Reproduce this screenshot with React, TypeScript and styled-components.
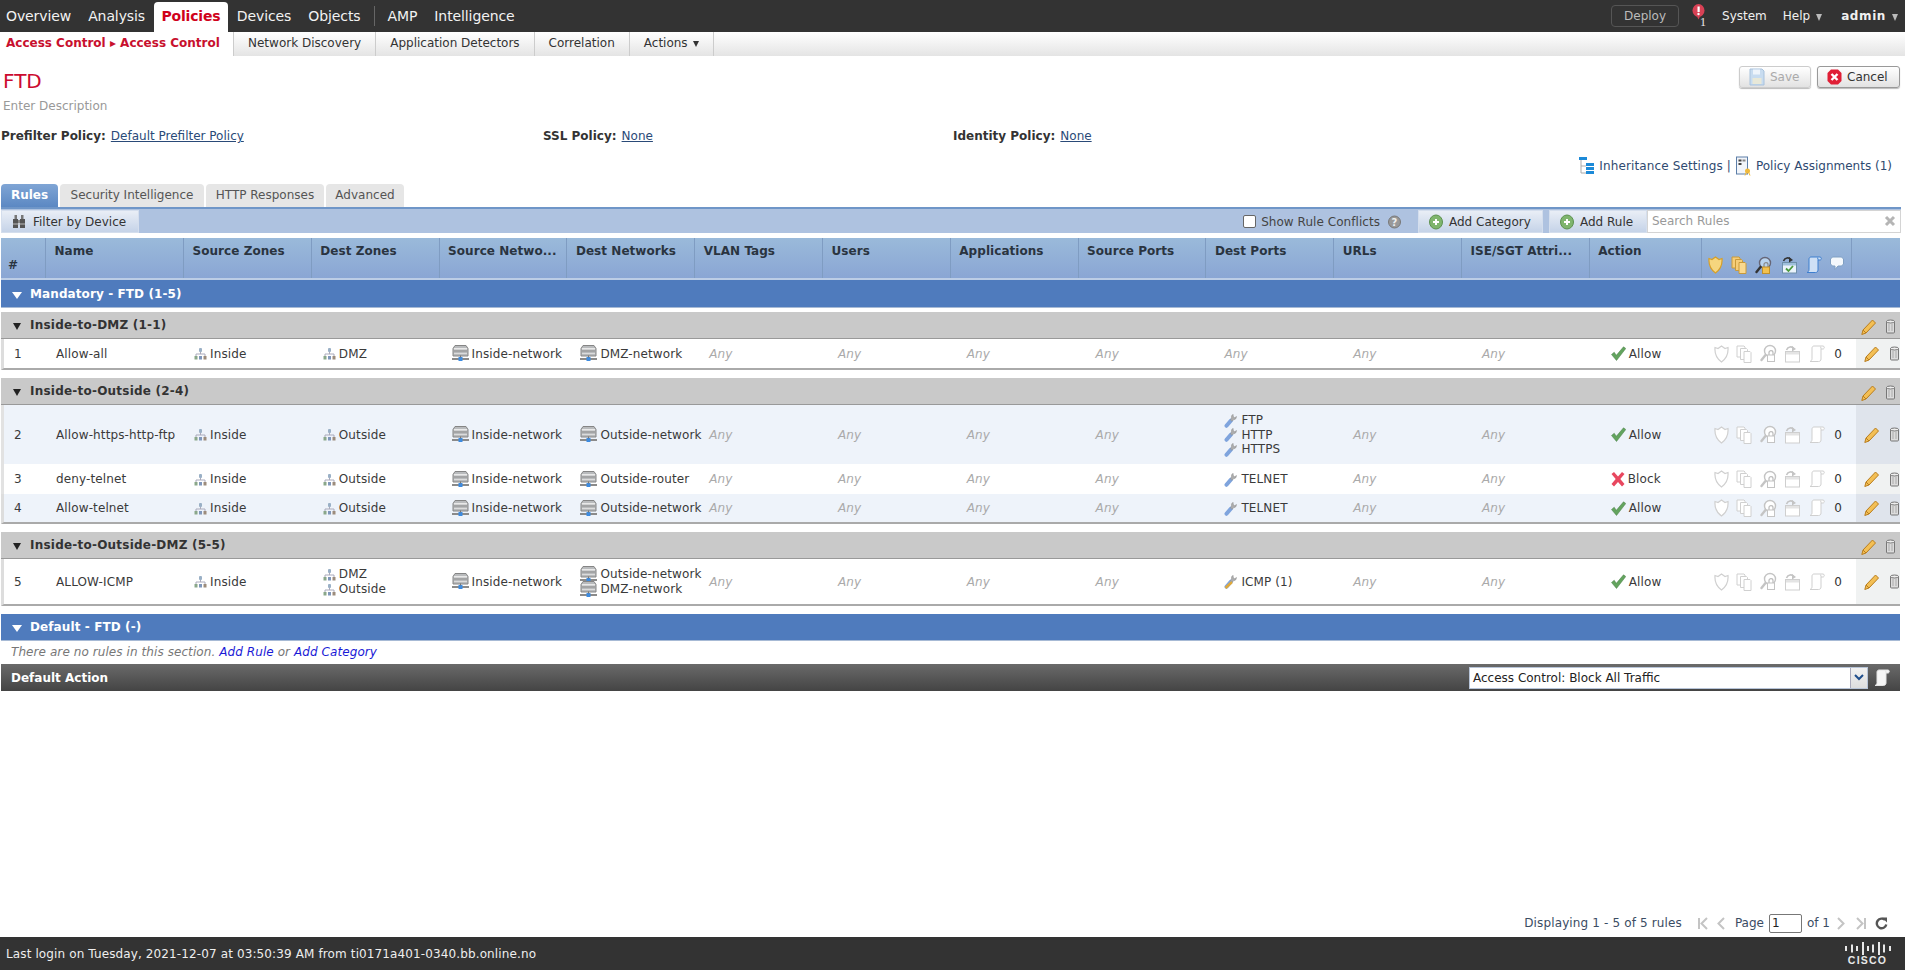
import React from "react";
import styled, { createGlobalStyle } from "styled-components";

const Global = createGlobalStyle`
  html, body { margin: 0; padding: 0; background: #fff; overflow: hidden; }
  body { font-family: "DejaVu Sans", Verdana, sans-serif; font-size: 12px; color: #333; }
  * { box-sizing: border-box; }
`;

const Page = styled.div`
  width: 1905px; height: 970px; display: flex; flex-direction: column; overflow: hidden;
`;

/* ---------- top navigation ---------- */
const TopBar = styled.header`
  height: 32px; background: #333; display: flex; align-items: flex-end; justify-content: space-between; flex: none;
`;
const NavGroup = styled.nav`
  display: flex; align-items: flex-end; height: 30px;
`;
const NavItem = styled.a<{ $active?: boolean }>`
  height: 30px; padding: 0 ${p => (p.$active ? 8 : 8.5)}px; line-height: 29px; font-size: 14px; display: block;
  color: ${p => (p.$active ? "#d0021b" : "#f2f2f2")};
  background: ${p => (p.$active ? "#fff" : "transparent")};
  border-radius: ${p => (p.$active ? "4px 4px 0 0" : "0")};
  font-weight: ${p => (p.$active ? 700 : 400)};
  letter-spacing: ${p => (p.$active ? "-.2px" : "-.1px")};
`;
const FirstNav = styled(NavItem)`padding-left: 6px;`;
const NavDivider = styled.span`
  width: 1px; height: 20px; background: #666; margin: 0 4px 6px 5px;
`;
const RightNav = styled.div`
  display: flex; align-items: center; height: 32px; padding-right: 7px; color: #f0f0f0; font-size: 12px;
`;
const DeployButton = styled.span`
  width: 68px; height: 22px; border: 1px solid #555; border-radius: 4px; color: #bbb; text-align: center; line-height: 20px; margin-right: 13px;
`;
const Alert = styled.span`
  display: flex; align-items: flex-start; width: 14px; height: 24px; position: relative;
`;
const AlertCount = styled.span`
  position: absolute; left: 8px; top: 11px; font-size: 12px; font-family: "Liberation Serif", serif; color: #eee;
`;
const RightLink = styled.span<{ $bold?: boolean }>`
  margin-left: ${p => (p.$bold ? 19 : 16)}px; font-weight: ${p => (p.$bold ? 700 : 400)}; white-space: nowrap;
  letter-spacing: ${p => (p.$bold ? ".6px" : "0")};
`;
const Caret = styled.i`
  display: inline-block; width: 0; height: 0; border: 3.5px solid transparent; border-top: 7px solid #bbb; border-bottom: 0; margin-left: 6px; vertical-align: -1px;
`;

const SubNav = styled.div`
  height: 24px; flex: none; display: flex; background: linear-gradient(#fff, #e4e4e4);
`;
const SubActive = styled.div`
  width: 234px; height: 24px; background: #fff; color: #c8102e; font-weight: 700; padding-left: 6px; line-height: 22px; border-right: 1px solid #ccc; white-space: nowrap; font-size: 12px;
`;
const SubItem = styled.div`
  height: 24px; padding: 0 14px; line-height: 22px; border-right: 1px solid #ccc; color: #333; white-space: nowrap;
`;
const SmallCaret = styled.i`
  display: inline-block; width: 0; height: 0; border: 3px solid transparent; border-top: 6px solid #333; border-bottom: 0; margin-left: 5px;
`;

/* ---------- policy title ---------- */
const TitleBlock = styled.section`
  height: 128px; flex: none; display: flex; flex-direction: column; padding-right: 5px;
`;
const TitleRow = styled.div`
  display: flex; justify-content: space-between; height: 35px; padding-top: 10px;
`;
const Title = styled.h1`
  margin: 0 0 0 3px; font-size: 20px; font-weight: 400; color: #cc0a2f; line-height: 30px;
`;
const Buttons = styled.div`
  display: flex; gap: 6px;
`;
const ActionButton = styled.button<{ $disabled?: boolean; $w: number }>`
  width: ${p => p.$w}px; height: 22px; padding: 0 0 0 9px; display: flex; align-items: center; gap: 5px; font: 12px "DejaVu Sans", sans-serif;
  color: ${p => (p.$disabled ? "#aaa" : "#333")}; border: 1px solid ${p => (p.$disabled ? "#ccc" : "#999")}; border-radius: 3px;
  background: linear-gradient(#fff, #e2e2e2); box-shadow: 0 1px 1px #bbb;
`;
const Description = styled.div`
  margin: 8px 0 0 3px; color: #999; line-height: 14px;
`;
const PolicyRow = styled.div`
  display: flex; margin-top: 16px; height: 15px; line-height: 15px; white-space: nowrap;
`;
const PolicyItem = styled.div<{ $w: number; $pad?: number }>`
  width: ${p => p.$w}px; padding-left: ${p => p.$pad ?? 0}px;
  b { color: #333; margin-right: 5px; }
  a { color: #2a4a78; text-decoration: underline; }
`;
const InheritRow = styled.div`
  display: flex; justify-content: flex-end; align-items: center; height: 18px; margin-top: 13px; padding-right: 8px; gap: 5px; color: #2f4a70; white-space: nowrap;
`;
const InheritText = styled.span`letter-spacing: .12px;`;

/* ---------- tabs + toolbar ---------- */
const TabBar = styled.div`
  height: 23px; flex: none; display: flex; gap: 2px; padding-left: 1px;
`;
const Tab = styled.div<{ $active?: boolean; $w: number }>`
  width: ${p => p.$w}px; height: 23px; text-align: center; line-height: 23px; border-radius: 4px 4px 0 0;
  background: ${p => (p.$active ? "linear-gradient(#7fa5d5, #5c88c3)" : "#e6e6e6")};
  color: ${p => (p.$active ? "#fff" : "#555")}; font-weight: ${p => (p.$active ? 700 : 400)};
`;
const Toolbar = styled.div`
  width: 1900px; height: 26px; flex: none; margin-left: 1px; display: flex; align-items: stretch; background: #aec2e0; border-top: 2px solid #6f96c8; padding-top: 1px;
`;
const ToolButton = styled.div<{ $w: number; $gap?: number }>`
  width: ${p => p.$w}px; height: 23px; display: flex; align-items: center; gap: ${p => p.$gap ?? 6}px; padding-left: 10px; background: linear-gradient(#e9eef6, #c5d3e8); border: 1px solid #d4deed; color: #333; white-space: nowrap;
`;
const Spacer = styled.div`flex: 1;`;
const ConflictLabel = styled.label`
  display: flex; align-items: center; color: #444; margin-right: 17px; white-space: nowrap;
`;
const ConflictText = styled.span`margin: 0 8px 0 5px; letter-spacing: .05px;`;
const CheckBox = styled.span`
  width: 13px; height: 13px; background: #fff; border: 1px solid #666; border-radius: 2px;
`;
const ToolGap = styled.div`width: 6px;`;
const SearchBox = styled.div`
  width: 254px; height: 23px; background: #fff; border: 1px solid #d4d4d4; display: flex; align-items: center; justify-content: space-between; padding: 0 4px 2px 4px; color: #999;
`;

/* ---------- table ---------- */
const Table = styled.div`
  width: 1899px; margin: 5px 0 0 1px; flex: none; overflow: hidden;
`;
const HeaderRow = styled.div`
  height: 42px; display: grid; grid-template-columns: 45px 138px repeat(11, 127.8px) 112px 150px 1fr; background: linear-gradient(#9abada, #8aa6d4); border-bottom: 2px solid #bccde6;
`;
const HeadCell = styled.div<{ $bottom?: boolean; $last?: boolean }>`
  font-weight: 700; color: #2a3440; padding: ${p => (p.$bottom ? "20px 0 0 7px" : "6px 0 0 8.5px")}; border-right: ${p => (p.$last ? "0" : "1px solid #7f9cc2")}; white-space: nowrap; line-height: 14px; letter-spacing: .05px;
`;
const HeadIcons = styled.div`
  display: flex; padding: 18px 0 0 6px; gap: 8.3px; border-right: 1px solid #7f9cc2;
`;
const Band = styled.div<{ $mt?: number; $h?: number }>`
  height: ${p => p.$h ?? 28}px; margin-top: ${p => p.$mt ?? 0}px; background: #4f7bbd; border-bottom: 1px solid #a7bad5; color: #fff; font-weight: 700; display: flex; align-items: center; padding-left: 11px; gap: 8px; width: 1899px; letter-spacing: .1px;
`;
const BandCaret = styled.i`
  display: block; width: 0; height: 0; border: 5.5px solid transparent; border-top: 7px solid #fff; border-bottom: 0; margin-top: 3px;
`;
const Category = styled.div<{ $mt: number }>`
  height: 27px; margin-top: ${p => p.$mt}px; background: #c9c9c9; border-bottom: 1px solid #999; display: flex; align-items: center; padding-left: 12px; gap: 9px; color: #333; font-weight: 700; letter-spacing: .22px;
`;
const CategoryCaret = styled.i`
  display: block; width: 0; height: 0; border: 4.5px solid transparent; border-top: 7px solid #222; border-bottom: 0; margin-top: 3px;
`;
const CategoryOps = styled.div`
  margin-left: auto; display: flex; gap: 9px; padding: 3px 4px 0 0; align-items: center;
`;
const RuleRow = styled.div<{ $h: number; $alt?: boolean; $last?: boolean }>`
  height: ${p => p.$h}px; display: grid; grid-template-columns: 42px 138px repeat(11, 128.8px) 104px 151px 1fr; align-items: stretch;
  background: ${p => (p.$alt ? "#eef3fa" : "#fff")}; border-left: 3px solid ${p => (p.$last ? "#ddd" : "#e2e2e2")}; border-bottom: ${p => (p.$last ? "2px solid #aaa" : "0")};
  color: #3a3a3a; white-space: nowrap; letter-spacing: .12px;
`;
const Cell = styled.div<{ $pad?: number }>`
  display: flex; flex-direction: column; justify-content: center; padding-left: ${p => p.$pad ?? 10}px; line-height: 14px; min-width: 0;
`;
const Any = styled(Cell)`
  color: #aaa; font-style: italic;
`;
const Item = styled.div<{ $gap?: number; $lh?: number }>`
  display: flex; align-items: center; gap: ${p => p.$gap ?? 3}px; height: ${p => p.$lh ?? 15}px;
`;
const IconCell = styled.div`
  display: flex; align-items: center; padding-left: 9px; gap: 7.5px;
`;
const Zero = styled.span`
  color: #333; margin-left: 2px;
`;
const OpsCell = styled.div<{ $alt?: boolean }>`
  display: flex; align-items: center; gap: 10px; padding-left: 8px; background: ${p => (p.$alt ? "#dfe4ec" : "#f0f2f2")}; overflow: hidden;
`;
const NoRules = styled.div`
  height: 23px; line-height: 22px; padding-left: 10px; font-style: italic; color: #777; letter-spacing: .08px;
  a { color: #1a1ad6; }
`;
const DefaultAction = styled.div`
  height: 27px; background: linear-gradient(#6a6a6a, #444); display: flex; align-items: center; padding-left: 10px; color: #fff; font-weight: 700;
`;
const Select = styled.div`
  margin-left: auto; width: 399px; height: 22px; background: #fff; border: 1px solid #b7c4d8; display: flex; align-items: center; justify-content: space-between; font-weight: 400; color: #222; padding-left: 3px;
`;
const SelectArrow = styled.span`
  width: 17px; height: 20px; background: linear-gradient(#f2f2f2, #ddd); border-left: 1px solid #aab; display: flex; align-items: center; justify-content: center;
`;
const NoteWrap = styled.span`
  display: flex; margin: 0 10px 0 6px;
`;

/* ---------- pager + footer ---------- */
const Pager = styled.div`
  margin-top: auto; height: 28px; flex: none; display: flex; align-items: center; justify-content: flex-end; padding: 0 17px 0 0; color: #3b4c63; white-space: nowrap;
`;
const PagerInfo = styled.span`margin-right: 15px; letter-spacing: .14px;`;
const PagerIcon = styled.span<{ $mr?: number }>`display: flex; margin-right: ${p => p.$mr ?? 6}px;`;
const PageInput = styled.span`
  width: 33px; height: 19px; border: 1px solid #777; border-radius: 2px; margin: 0 5px 0 5px; padding-left: 2px; color: #222; line-height: 17px; background: #fff;
`;
const Footer = styled.footer`
  height: 33px; flex: none; background: #333; color: #eee; display: flex; align-items: center; justify-content: space-between; padding: 0 14px 0 6px; letter-spacing: .12px;
`;
const CiscoMark = styled.div`
  display: flex; flex-direction: column; align-items: center; width: 47px;
`;
const CiscoWord = styled.span`
  color: #e8e8e8; font: 700 10.5px/10px "Liberation Sans", sans-serif; letter-spacing: 1.2px;
`;

/* ---------- icons ---------- */
const Svg = ({ w = 16, h = 16, children }: { w?: number; h?: number; children: React.ReactNode }) => (
  <svg width={w} height={h} viewBox={`0 0 ${w} ${h}`} style={{ flex: "none", display: "block" }}>{children}</svg>
);
const Zone = () => (
  <Svg w={13} h={13}>
    <rect x="5" y="1" width="3" height="4" rx="1" fill="#9ab0c6" />
    <path d="M6.500 5v2M2 9V7h9v2" stroke="#aab" fill="none" />
    <rect x="0.500" y="9" width="3" height="3.500" fill="#8aa78a" />
    <rect x="5" y="9" width="3" height="3.500" fill="#7f97bc" />
    <rect x="9.500" y="9" width="3" height="3.500" fill="#9c8c7c" />
  </Svg>
);
const Net = () => (
  <Svg w={17} h={17}>
    <path d="M3 .5h11L16 3.500V11H1V3.500z" fill="#b9bbbd" stroke="#858585" />
    <rect x="2" y="3" width="13" height="1.500" fill="#e9e9e9" />
    <rect x="2" y="5.500" width="13" height="1" fill="#8e8e8e" />
    <rect x="2" y="8" width="13" height="1" fill="#dcdcdc" />
    <rect x="0" y="13" width="17" height="2" fill="#8a8a8a" />
    <rect x="6.500" y="12" width="4" height="4" fill="#3d8be0" />
    <rect x="8" y="10.500" width="1" height="2" fill="#777" />
  </Svg>
);
const Wrench = ({ tag }: { tag?: boolean }) => (
  <Svg w={13} h={15}>
    <path d="M2.500 12.800 7 7.500" stroke="#7fa4dd" strokeWidth="4" strokeLinecap="round" />
    <path d="M9 1.300A3.300 3.300 0 0 0 7.500 5L6.500 7 8 8.300 9.500 6.800A3.300 3.300 0 0 0 12.500 3.500L10.700 4.700 9.300 3.600z" fill="#adadad" stroke="#8c8c8c" strokeWidth=".5" />
    {tag && <path d="M1.500 14 8 8" stroke="#e0a93a" strokeWidth="2.400" />}
  </Svg>
);
const Check = () => (
  <Svg w={15} h={15}>
    <path d="M.5 8.500 3.200 6.200 5.300 9.300 12.500.8 14.800 2.500 5.500 14.500z" fill="#63a45e" stroke="#4a7f48" strokeWidth=".5" />
  </Svg>
);
const Cross = () => (
  <Svg w={14} h={16}>
    <path d="M3 1l4 4.500L11 1l2.500 2L9.300 8l4.200 5-2.500 2.500L7 11l-4 4.500L.5 13l4.200-5L.5 3z" fill="#e8475f" />
  </Svg>
);
const Shield = ({ on }: { on?: boolean }) => (
  <Svg w={15} h={18}>
    <path d="M1 2.500 4 3.500 7.500 1 11 3.500l3-1c.5 6-1.500 11-6.500 14.500C2.500 13.500 .5 8.500 1 2.500z" fill={on ? "#f6d67e" : "#fff"} stroke={on ? "#d69f2a" : "#d0d0d0"} strokeWidth="1.200" />
  </Svg>
);
const Copy = ({ on }: { on?: boolean }) => (
  <Svg w={16} h={18}>
    <path d="M1 1h7l1 1v10H1z" fill={on ? "#f5cd78" : "#fff"} stroke={on ? "#c99a3a" : "#d0d0d0"} />
    <path d="M4.500 3.500h6l1 1v10h-7z" fill={on ? "#f5cd78" : "#fff"} stroke={on ? "#c99a3a" : "#d0d0d0"} />
    <path d="M8 6.500h6l1 1v10H8z" fill={on ? "#fad98f" : "#fff"} stroke={on ? "#c99a3a" : "#d0d0d0"} />
  </Svg>
);
const SearchLock = ({ on }: { on?: boolean }) => (
  <Svg w={17} h={19}>
    <circle cx="10" cy="7" r="5.500" fill={on ? "#b8d3ee" : "#fff"} stroke={on ? "#667" : "#c4c4c4"} strokeWidth="1.400" />
    <path d="M5.500 11 1.500 16" stroke={on ? "#333" : "#c4c4c4"} strokeWidth="2.400" strokeLinecap="round" />
    <path d="M9 11V8.500c0-2.500 4-2.500 4 0V11" fill="none" stroke={on ? "#888" : "#bbb"} strokeWidth="1.200" />
    <rect x="7.500" y="11" width="7" height="6.500" fill={on ? "#f2c14e" : "#fff"} stroke={on ? "#c0902a" : "#c4c4c4"} />
  </Svg>
);
const Inspect = ({ on }: { on?: boolean }) => (
  <Svg w={17} h={18}>
    <rect x="1.500" y="6.500" width="14" height="10.500" fill={on ? "#eaf3fb" : "#fff"} stroke={on ? "#6e8faa" : "#cfcfcf"} />
    <rect x="2" y="7" width="13" height="2.500" fill={on ? "#9fc0dc" : "#e4e4e4"} />
    <path d="M2.500 5C4 1.500 8 1 9.500 3.500" fill="none" stroke={on ? "#333" : "#c4c4c4"} strokeWidth="1.600" />
    <path d="M8 1l4 3-4 2.500z" fill={on ? "#333" : "#c4c4c4"} />
    {on && <path d="M5 12.500l2.500 2.500 4.500-5" fill="none" stroke="#4c9a3e" strokeWidth="1.800" />}
  </Svg>
);
const Scroll = ({ on, light }: { on?: boolean; light?: boolean }) => {
  const fill = light ? "#f6f6f6" : on ? "#cfe0f5" : "#fff";
  const stroke = light ? "#e4e4e4" : on ? "#3d7ecf" : "#cfcfcf";
  return (
    <Svg w={16} h={18}>
      <path d="M5 1h9c1.500 0 1.800 2.500.3 3H12v10c0 1.500-1 2.500-2.500 2.500H1c1.200-.6 2-1.400 2-2.700V3c0-1.200 1-2 2-2z" fill={fill} stroke={stroke} />
      <path d="M11 1.500c1 .5 1 2 1 2.500" fill="none" stroke={stroke} />
    </Svg>
  );
};
const Bubble = () => (
  <Svg w={14} h={15}>
    <path d="M2.500 1h9L13.500 3v5l-2 2H8L5 13.500V10H2.500L.5 8V3z" fill="#f4f8fc" stroke="#7f9fc2" />
  </Svg>
);
const Pencil = () => (
  <Svg w={15} h={16}>
    <path d="M11.500 1 14.500 4 5 14 .8 15.500 2 11z" fill="#f3bf55" stroke="#b87d1d" />
    <path d="M2 11l3 3" stroke="#b87d1d" />
  </Svg>
);
const Trash = () => (
  <Svg w={11} h={15}>
    <rect x="1.500" y="2" width="8" height="12" rx="1" fill="#dcdcdc" stroke="#777" />
    <ellipse cx="5.500" cy="2.500" rx="4" ry="1.500" fill="#eee" stroke="#777" />
    <path d="M4 5v7M7 5v7" stroke="#aaa" />
  </Svg>
);
const AddIcon = () => (
  <Svg w={14} h={16}>
    <ellipse cx="7" cy="8" rx="6.500" ry="7" fill="#7fb56e" stroke="#5d9150" />
    <path d="M7 5v6M4 8h6" stroke="#fff" strokeWidth="2" />
  </Svg>
);
const Binoculars = () => (
  <Svg w={14} h={15}>
    <rect x="1" y="5" width="5" height="9" fill="#555" />
    <rect x="8" y="5" width="5" height="9" fill="#555" />
    <rect x="2.500" y="1" width="2.500" height="4" fill="#777" />
    <rect x="9" y="1" width="2.500" height="4" fill="#777" />
    <rect x="6" y="6" width="2" height="3" fill="#888" />
    <path d="M1 10h12" stroke="#bbb" />
  </Svg>
);
const Help = () => (
  <Svg w={13} h={14}>
    <circle cx="6.500" cy="7" r="6" fill="#999" stroke="#777" />
    <text x="6.500" y="10.500" textAnchor="middle" fontSize="10" fontWeight="700" fill="#eee" fontFamily="DejaVu Sans">?</text>
  </Svg>
);
const CloseX = () => (
  <Svg w={12} h={12}>
    <path d="M2 2 10 10M10 2 2 10" stroke="#b5b5b5" strokeWidth="3" />
  </Svg>
);
const TreeIcon = () => (
  <Svg w={16} h={20}>
    <rect x="1" y="1" width="8" height="3" fill="#1c8ad8" />
    <path d="M3 4v13h5M3 10h5" fill="none" stroke="#aaa" />
    <rect x="8" y="7" width="8" height="3" fill="#1c8ad8" />
    <rect x="8" y="11" width="8" height="3" fill="#1c8ad8" />
    <rect x="8" y="15" width="8" height="3" fill="#1c8ad8" />
  </Svg>
);
const AssignIcon = () => (
  <Svg w={15} h={20}>
    <rect x=".5" y="1" width="11" height="17" fill="#f2f5fa" stroke="#5c7ea8" />
    <rect x="2.500" y="3.500" width="3" height="2" fill="#444" />
    <rect x="6.500" y="3.500" width="3" height="2" fill="#888" />
    <rect x="2.500" y="7" width="3" height="2" fill="#444" />
    <circle cx="11.500" cy="15" r="2.500" fill="#f0b93a" />
    <path d="M10 17l-1 2.500M13 17l1 2.500" stroke="#f0b93a" />
  </Svg>
);
const SaveIcon = () => (
  <Svg w={16} h={18}>
    <path d="M1 1h12l2 2v14H1z" fill="#c8dcf0" stroke="#a9c2dc" />
    <rect x="4" y="1.500" width="7" height="5" fill="#eef4fb" />
    <rect x="3.500" y="10" width="9" height="6" fill="#e8e8d8" />
  </Svg>
);
const CancelIcon = () => (
  <Svg w={15} h={16}>
    <path d="M4 .5h7L14.500 4v8L11 15.500H4L.5 12V4z" fill="#e01f36" />
    <path d="M4.500 5 10.500 11M10.500 5 4.500 11" stroke="#fff" strokeWidth="2.400" />
  </Svg>
);
const AlertIcon = () => (
  <Svg w={13} h={18}>
    <ellipse cx="6.500" cy="6.500" rx="6" ry="6.500" fill="#d84155" />
    <rect x="5.500" y="2.500" width="2.200" height="5.500" fill="#fff" />
    <circle cx="6.500" cy="10" r="1.200" fill="#fff" />
    <path d="M5 12.500h3l-1.500 3z" fill="#d84155" />
  </Svg>
);
const Chevron = () => (
  <Svg w={10} h={7}>
    <path d="M1 1 5 5 9 1" stroke="#1f4e8c" strokeWidth="2" fill="none" />
  </Svg>
);
const PagerGlyph = ({ d }: { d: string }) => (
  <Svg w={12} h={13}>
    <path d={d} fill="none" stroke="#c4c4c4" strokeWidth="2" />
  </Svg>
);
const Refresh = () => (
  <Svg w={13} h={13}>
    <path d="M10 3A4.800 4.800 0 1 0 11.300 7.500" fill="none" stroke="#555" strokeWidth="2.400" />
    <path d="M7 .5h5v5z" fill="#555" />
  </Svg>
);
const CiscoBars = () => (
  <svg width="46" height="13" viewBox="0 0 46 13" style={{ display: "block" }}>
    {[[1, 5], [7, 8], [12, 5], [18, 13], [23, 5], [28, 8], [34, 13], [39, 8], [45, 5]].map(([x, h]) => (
      <rect key={x} x={x - 1} y={(13 - h) / 2} width="2" height={h} fill="#e8e8e8" />
    ))}
  </svg>
);

/* ---------- data ---------- */
type Rule = {
  n: number; name: string; src: string; dst: string[]; net: string; dnet: string[];
  ports: string[]; tag?: boolean; block?: boolean; h: number; alt?: boolean; last?: boolean;
};
const categories: { title: string; mt: number; rules: Rule[] }[] = [
  { title: "Inside-to-DMZ (1-1)", mt: 4, rules: [
    { n: 1, name: "Allow-all", src: "Inside", dst: ["DMZ"], net: "Inside-network", dnet: ["DMZ-network"], ports: [], h: 31, last: true },
  ]},
  { title: "Inside-to-Outside (2-4)", mt: 8, rules: [
    { n: 2, name: "Allow-https-http-ftp", src: "Inside", dst: ["Outside"], net: "Inside-network", dnet: ["Outside-network"], ports: ["FTP", "HTTP", "HTTPS"], h: 59, alt: true },
    { n: 3, name: "deny-telnet", src: "Inside", dst: ["Outside"], net: "Inside-network", dnet: ["Outside-router"], ports: ["TELNET"], block: true, h: 30 },
    { n: 4, name: "Allow-telnet", src: "Inside", dst: ["Outside"], net: "Inside-network", dnet: ["Outside-network"], ports: ["TELNET"], h: 30, alt: true, last: true },
  ]},
  { title: "Inside-to-Outside-DMZ (5-5)", mt: 8, rules: [
    { n: 5, name: "ALLOW-ICMP", src: "Inside", dst: ["DMZ", "Outside"], net: "Inside-network", dnet: ["Outside-network", "DMZ-network"], ports: ["ICMP (1)"], tag: true, h: 47, last: true },
  ]},
];
const headers = ["Name", "Source Zones", "Dest Zones", "Source Netwo...", "Dest Networks", "VLAN Tags", "Users", "Applications", "Source Ports", "Dest Ports", "URLs", "ISE/SGT Attri...", "Action"];

const RowView = ({ r }: { r: Rule }) => (
  <RuleRow $h={r.h} $alt={r.alt} $last={r.last}>
    <Cell>{r.n}</Cell>
    <Cell>{r.name}</Cell>
    <Cell><Item><Zone />{r.src}</Item></Cell>
    <Cell>{r.dst.map(d => <Item key={d}><Zone />{d}</Item>)}</Cell>
    <Cell><Item $gap={3} $lh={17}><Net />{r.net}</Item></Cell>
    <Cell>{r.dnet.map(d => <Item key={d} $gap={3} $lh={15}><Net />{d}</Item>)}</Cell>
    <Any>Any</Any>
    <Any>Any</Any>
    <Any>Any</Any>
    <Any>Any</Any>
    {r.ports.length
      ? <Cell>{r.ports.map(p => <Item key={p} $gap={4} $lh={14.500}><Wrench tag={r.tag} />{p}</Item>)}</Cell>
      : <Any>Any</Any>}
    <Any>Any</Any>
    <Any>Any</Any>
    <Cell><Item $gap={3}>{r.block ? <Cross /> : <Check />}{r.block ? "Block" : "Allow"}</Item></Cell>
    <IconCell>
      <Shield /><Copy /><SearchLock /><Inspect /><Scroll /><Zero>0</Zero>
    </IconCell>
    <OpsCell $alt={r.alt}><Pencil /><Trash /></OpsCell>
  </RuleRow>
);

export default function App() {
  return (
    <Page>
      <Global />
      <TopBar>
        <NavGroup>
          <FirstNav>Overview</FirstNav>
          <NavItem>Analysis</NavItem>
          <NavItem $active>Policies</NavItem>
          <NavItem>Devices</NavItem>
          <NavItem>Objects</NavItem>
          <NavDivider />
          <NavItem>AMP</NavItem>
          <NavItem>Intelligence</NavItem>
        </NavGroup>
        <RightNav>
          <DeployButton>Deploy</DeployButton>
          <Alert><AlertIcon /><AlertCount>1</AlertCount></Alert>
          <RightLink>System</RightLink>
          <RightLink>Help<Caret /></RightLink>
          <RightLink $bold>admin<Caret /></RightLink>
        </RightNav>
      </TopBar>
      <SubNav>
        <SubActive>Access Control ▸ Access Control</SubActive>
        <SubItem>Network Discovery</SubItem>
        <SubItem>Application Detectors</SubItem>
        <SubItem>Correlation</SubItem>
        <SubItem>Actions<SmallCaret /></SubItem>
      </SubNav>
      <TitleBlock>
        <TitleRow>
          <Title>FTD</Title>
          <Buttons>
            <ActionButton $disabled $w={72}><SaveIcon />Save</ActionButton>
            <ActionButton $w={83}><CancelIcon />Cancel</ActionButton>
          </Buttons>
        </TitleRow>
        <Description>Enter Description</Description>
        <PolicyRow>
          <PolicyItem $w={543} $pad={1}><b>Prefilter Policy:</b><a>Default Prefilter Policy</a></PolicyItem>
          <PolicyItem $w={410}><b>SSL Policy:</b><a>None</a></PolicyItem>
          <PolicyItem $w={300}><b>Identity Policy:</b><a>None</a></PolicyItem>
        </PolicyRow>
        <InheritRow><TreeIcon /><InheritText>Inheritance Settings | </InheritText><AssignIcon />Policy Assignments (1)</InheritRow>
      </TitleBlock>
      <TabBar>
        <Tab $active $w={57}>Rules</Tab>
        <Tab $w={144}>Security Intelligence</Tab>
        <Tab $w={118}>HTTP Responses</Tab>
        <Tab $w={78}>Advanced</Tab>
      </TabBar>
      <Toolbar>
        <ToolButton $w={138} $gap={7}><Binoculars />Filter by Device</ToolButton>
        <Spacer />
        <ConflictLabel><CheckBox /><ConflictText>Show Rule Conflicts</ConflictText><Help /></ConflictLabel>
        <ToolButton $w={125}><AddIcon />Add Category</ToolButton>
        <ToolGap />
        <ToolButton $w={98}><AddIcon />Add Rule</ToolButton>
        <SearchBox>Search Rules<CloseX /></SearchBox>
      </Toolbar>
      <Table>
        <HeaderRow>
          <HeadCell $bottom>#</HeadCell>
          {headers.map(h => <HeadCell key={h}>{h}</HeadCell>)}
          <HeadIcons><Shield on /><Copy on /><SearchLock on /><Inspect on /><Scroll on /><Bubble /></HeadIcons>
          <HeadCell $last />
        </HeaderRow>
        <Band><BandCaret />Mandatory - FTD (1-5)</Band>
        {categories.map(c => (
          <React.Fragment key={c.title}>
            <Category $mt={c.mt}>
              <CategoryCaret />{c.title}
              <CategoryOps><Pencil /><Trash /></CategoryOps>
            </Category>
            {c.rules.map(r => <RowView key={r.n} r={r} />)}
          </React.Fragment>
        ))}
        <Band $mt={8} $h={27}><BandCaret />Default - FTD (-)</Band>
        <NoRules>There are no rules in this section. <a>Add Rule</a> or <a>Add Category</a></NoRules>
        <DefaultAction>
          Default Action
          <Select>Access Control: Block All Traffic<SelectArrow><Chevron /></SelectArrow></Select>
          <NoteWrap><Scroll light /></NoteWrap>
        </DefaultAction>
      </Table>
      <Pager>
        <PagerInfo>Displaying 1 - 5 of 5 rules</PagerInfo>
        <PagerIcon><PagerGlyph d="M2 1v11M10 1 4.500 6.500 10 12" /></PagerIcon>
        <PagerIcon $mr={8}><PagerGlyph d="M9 1 3.500 6.500 9 12" /></PagerIcon>
        Page<PageInput>1</PageInput>of 1
        <PagerIcon $mr={5} />
        <PagerIcon $mr={8}><PagerGlyph d="M3 1 8.500 6.500 3 12" /></PagerIcon>
        <PagerIcon $mr={8}><PagerGlyph d="M2 1 7.500 6.500 2 12M10 1v11" /></PagerIcon>
        <Refresh />
      </Pager>
      <Footer>
        Last login on Tuesday, 2021-12-07 at 03:50:39 AM from ti0171a401-0340.bb.online.no
        <CiscoMark><CiscoBars /><CiscoWord>CISCO</CiscoWord></CiscoMark>
      </Footer>
    </Page>
  );
}
